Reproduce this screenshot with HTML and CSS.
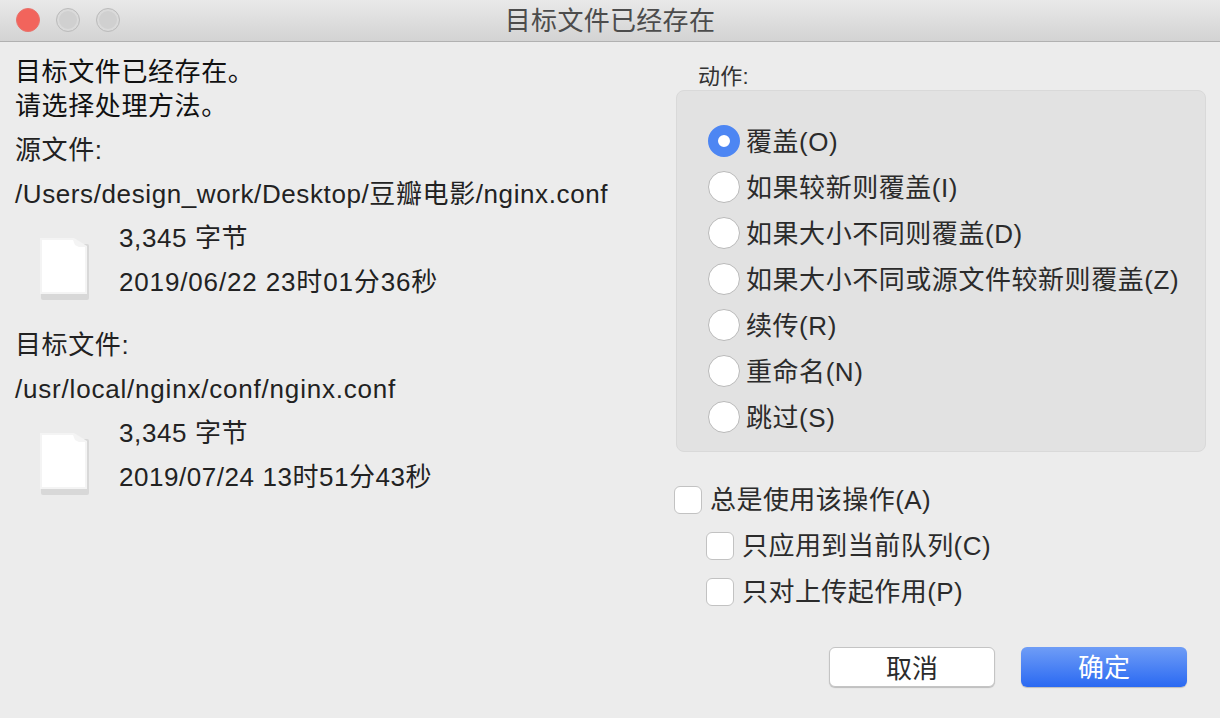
FILE: index.html
```html
<!DOCTYPE html>
<html lang="zh-CN">
<head>
<meta charset="utf-8">
<title>目标文件已经存在</title>
<link rel="stylesheet" href="styles.css">
</head>
<body>
<div class="window">
  <header class="titlebar">
    <div class="lights">
      <span class="light close"></span>
      <span class="light off"></span>
      <span class="light off"></span>
    </div>
    <div class="title">目标文件已经存在</div>
  </header>
  <main class="content">
    <section class="left">
      <div class="intro">
        <div class="line-intro">目标文件已经存在。</div>
        <div class="line-intro">请选择处理方法。</div>
      </div>
      <div class="file-block">
        <div class="line">源文件:</div>
        <div class="line">/Users/design_work/Desktop/豆瓣电影/nginx.conf</div>
        <div class="file-info">
          <svg class="doc" width="54" height="66" viewBox="0 0 54 66"><path class="doc-shadow" d="M3 8h46a2 2 0 0 1 2 2v52a2 2 0 0 1-2 2H5a2 2 0 0 1-2-2z"/><path class="doc-edge" d="M2 2h34l13 8v48H2z"/><path class="doc-page" d="M4 4h31l2 5 4 2h6v45H4z"/></svg>
          <div class="meta">
            <div class="line">3,345 字节</div>
            <div class="line date">2019/06/22 23时01分36秒</div>
          </div>
        </div>
      </div>
      <div class="file-block second">
        <div class="line">目标文件:</div>
        <div class="line path">/usr/local/nginx/conf/nginx.conf</div>
        <div class="file-info">
          <svg class="doc" width="54" height="66" viewBox="0 0 54 66"><path class="doc-shadow" d="M3 8h46a2 2 0 0 1 2 2v52a2 2 0 0 1-2 2H5a2 2 0 0 1-2-2z"/><path class="doc-edge" d="M2 2h34l13 8v48H2z"/><path class="doc-page" d="M4 4h31l2 5 4 2h6v45H4z"/></svg>
          <div class="meta">
            <div class="line">3,345 字节</div>
            <div class="line date-narrow">2019/07/24 13时51分43秒</div>
          </div>
        </div>
      </div>
    </section>
    <section class="right">
      <div class="group-label">动作:</div>
      <div class="group">
        <div class="option"><span class="radio checked"></span><span class="label">覆盖(O)</span></div>
        <div class="option"><span class="radio"></span><span class="label">如果较新则覆盖(I)</span></div>
        <div class="option"><span class="radio"></span><span class="label">如果大小不同则覆盖(D)</span></div>
        <div class="option"><span class="radio"></span><span class="label">如果大小不同或源文件较新则覆盖(Z)</span></div>
        <div class="option"><span class="radio"></span><span class="label">续传(R)</span></div>
        <div class="option"><span class="radio"></span><span class="label">重命名(N)</span></div>
        <div class="option"><span class="radio"></span><span class="label">跳过(S)</span></div>
      </div>
      <div class="checks">
        <div class="option"><span class="check"></span><span class="label">总是使用该操作(A)</span></div>
        <div class="option sub"><span class="check"></span><span class="label">只应用到当前队列(C)</span></div>
        <div class="option sub"><span class="check"></span><span class="label">只对上传起作用(P)</span></div>
      </div>
      <div class="buttons">
        <button class="btn">取消</button>
        <button class="btn primary">确定</button>
      </div>
    </section>
  </main>
</div>
</body>
</html>
```
FILE: styles.css
```css
* { box-sizing: border-box; }
html, body { margin: 0; height: 100%; }
body {
  width: 1220px;
  height: 718px;
  overflow: hidden;
  background: #ececec;
  font-family: "Liberation Sans", "Noto Sans CJK SC", sans-serif;
  font-size: 26px;
  letter-spacing: 0.6px;
  color: #222;
}
.window { display: flex; flex-direction: column; height: 718px; }
.titlebar {
  height: 42px;
  display: flex;
  align-items: center;
  background: linear-gradient(#e9e9e9, #d3d3d3);
  border-bottom: 1px solid #b1b1b1;
  position: relative;
  flex: none;
}
.lights { display: flex; gap: 16px; padding: 0 0 2px 16px; }
.light { width: 24px; height: 24px; border-radius: 50%; }
.close { background: #f2645c; border: 1px solid #e8736c; }
.off { background: #d0d0d0; border: 1px solid #bcbcbc; box-shadow: inset 0 0 0 2px #dadada; }
.title {
  position: absolute;
  left: 0; right: 0; top: 0;
  line-height: 43px;
  text-align: center;
  font-size: 26px;
  letter-spacing: 0.3px;
  color: #4c4c4c;
}
.content { display: flex; flex: 1; }
.left { width: 660px; padding: 13px 0 0 15px; }
.line-intro { height: 34px; line-height: 34px; color: #111; }
.line { height: 44px; line-height: 44px; white-space: nowrap; }
.path { letter-spacing: 0.8px; }
.date { letter-spacing: 0.85px; }
.date-narrow { letter-spacing: 0.55px; }
.file-block { margin-top: 5px; }
.file-block.second { margin-top: 19px; }
.file-info { display: flex; }
.doc { margin: 20px 0 0 23px; flex: none; filter: blur(0.4px); }
.doc-shadow { fill: #d8d8d8; }
.doc-edge { fill: #f4f4f4; }
.doc-page { fill: #fff; }
.meta { margin-left: 27px; }
.right { width: 560px; padding-left: 16px; letter-spacing: 0.55px; }
.group-label { margin-left: 22px; height: 26px; line-height: 26px; margin-top: 22px; font-size: 22px; letter-spacing: 0.3px; color: #333; }
.group {
  width: 530px;
  height: 362px;
  margin-top: 0;
  background: #e2e2e2;
  border: 1px solid #d9d9d9;
  border-radius: 8px;
  padding: 27px 0 0 31px;
}
.option { display: flex; align-items: center; height: 46px; white-space: nowrap; color: #2b2b2b; }
.label { margin-bottom: 4px; margin-left: -1px; }
.radio {
  width: 32px; height: 32px; margin-right: 7px;
  border-radius: 50%;
  background: #fff;
  border: 1px solid #b9b9b9;
  flex: none;
}
.radio.checked {
  border: 10px solid #4d86f3;
  background: #fff;
}
.checks { margin-top: 25px; margin-left: -2px; letter-spacing: 0.45px; }
.check {
  width: 28px; height: 28px; margin-right: 8px;
  border-radius: 6px;
  background: #fff;
  border: 1px solid #c2c2c2;
  flex: none;
}
.checks .label { margin-bottom: 6px; margin-left: 0; }
.sub { margin-left: 32px; }
.buttons { display: flex; gap: 26px; margin: 32px 0 0 153px; }
.btn {
  width: 166px; height: 40px;
  padding: 0 0 3px;
  border-radius: 6px;
  font: inherit;
  letter-spacing: 0;
  background: #fff;
  border: 1px solid #c4c4c4;
  box-shadow: 0 1px 1px rgba(0,0,0,.2);
  color: #2b2b2b;
}
.primary {
  background: linear-gradient(#6f9df6, #2a69f2);
  border: 0;
  color: #fff;
}
```
